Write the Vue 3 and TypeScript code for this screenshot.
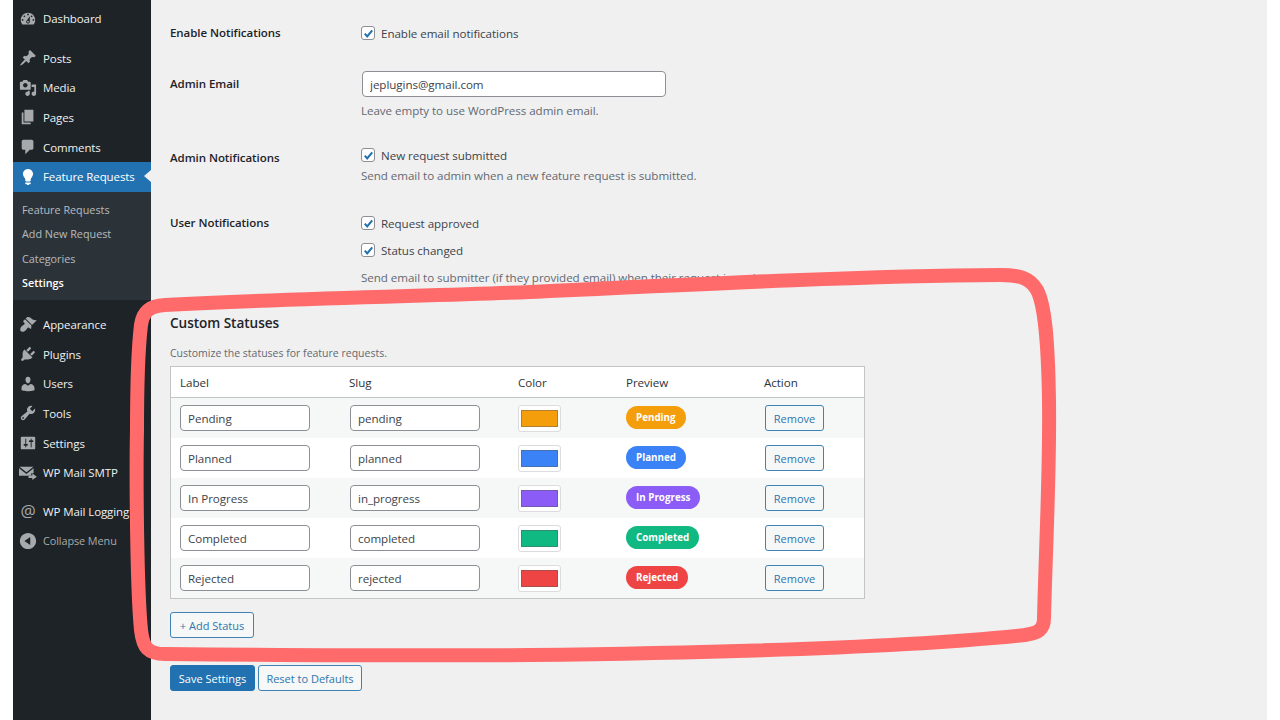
<script setup lang="ts">
interface MenuItem { label: string; d: string; sep?: boolean }
const p = {
  dashboard: 'M3.76 16h12.48c1.1-1.37 1.76-3.11 1.76-5 0-4.42-3.58-8-8-8s-8 3.58-8 8c0 1.89.66 3.63 1.76 5zM10 4c.55 0 1 .45 1 1s-.45 1-1 1-1-.45-1-1 .45-1 1-1zM6 6c.55 0 1 .45 1 1s-.45 1-1 1-1-.45-1-1 .45-1 1-1zm8 0c.55 0 1 .45 1 1s-.45 1-1 1-1-.45-1-1 .45-1 1-1zm-5.37 5.55L12 7v6c0 1.1-.9 2-2 2s-2-.9-2-2c0-.57.24-1.08.63-1.45zM4 10c.55 0 1 .45 1 1s-.45 1-1 1-1-.45-1-1 .45-1 1-1zm12 0c.55 0 1 .45 1 1s-.45 1-1 1-1-.45-1-1 .45-1 1-1zm-5 3c0-.55-.45-1-1-1s-1 .45-1 1 .45 1 1 1 1-.45 1-1z',
  post: 'M10.44 3.02l1.82-1.82 6.36 6.35-1.83 1.82c-1.05-.68-2.48-.57-3.41.36l-.75.75c-.92.93-1.04 2.35-.35 3.41l-1.83 1.82-2.41-2.41-2.8 2.79c-.42.42-3.38 2.71-3.8 2.29s1.86-3.39 2.28-3.81l2.79-2.79L4.1 9.36l1.83-1.82c1.05.69 2.48.57 3.4-.36l.75-.75c.93-.92 1.05-2.35.36-3.41z',
  media: 'M13 11V4c0-.55-.45-1-1-1h-1.67L9 1H5L3.67 3H2c-.55 0-1 .45-1 1v7c0 .55.45 1 1 1h10c.55 0 1-.45 1-1zM7 4.5c1.38 0 2.5 1.12 2.5 2.5S8.38 9.5 7 9.5 4.5 8.38 4.5 7 5.62 4.5 7 4.5zM14 6h5v10.5c0 1.38-1.12 2.5-2.5 2.5S14 17.88 14 16.5s1.12-2.5 2.5-2.5c.17 0 .34.02.5.05V9h-3V6zm-4 8.05V13h2v3.5c0 1.38-1.12 2.5-2.5 2.5S7 17.88 7 16.5 8.12 14 9.5 14c.17 0 .34.02.5.05z',
  page: 'M6 15V2h10v13H6zm-1 1h8v2H3V5h2v11z',
  comment: 'M5 2h9c1.1 0 2 .9 2 2v7c0 1.1-.9 2-2 2h-2l-5 5v-5H5c-1.1 0-2-.9-2-2V4c0-1.1.9-2 2-2z',
  bulb: 'M10 1c3.11 0 5.63 2.52 5.63 5.62 0 1.84-2.03 4.58-2.03 4.58-.33.44-.6 1.25-.6 1.8v1c0 .55-.45 1-1 1H8c-.55 0-1-.45-1-1v-1c0-.55-.27-1.36-.6-1.8 0 0-2.02-2.74-2.02-4.58C4.38 3.52 6.89 1 10 1zM7 16.87V16h6v.87c0 .62-.13 1.13-1.25 1.13H11v1H9v-1h-.75C7.13 18 7 17.5 7 16.87z',
  brush: 'M14.48 11.06L7.41 3.99l1.5-1.5c.5-.56 2.3-.47 3.51.32 1.21.8 1.43 1.28 2.91 2.1 1.18.64 2.45 1.26 4.45.85zm-.71.71L6.7 4.7 4.93 6.47c-.39.39-.39 1.02 0 1.41l1.06 1.06c.39.39.39 1.03 0 1.42-.6.6-1.43 1.11-2.21 1.69-.35.26-.7.53-1.01.84-1.34 1.34-1.86 3.35-.9 5.28 1.93.96 3.94.44 5.28-.9.31-.31.58-.66.84-1.01.58-.78 1.09-1.61 1.69-2.21.39-.39 1.03-.39 1.42 0l1.06 1.06c.39.39 1.02.39 1.41 0z',
  plugin: 'M13.11 4.36L9.87 7.6 8 5.73l3.24-3.24c.35-.34 1.05-.2 1.56.32.52.51.66 1.21.31 1.55zm-8 1.77l.91-1.12 9.01 9.01-1.19.84c-.71.71-2.63 1.16-3.82 1.16H6.14L4.9 17.26c-.59.59-1.54.59-2.12 0-.59-.58-.59-1.53 0-2.12l1.24-1.24v-3.88c0-1.13.4-3.19 1.09-3.89zm7.26 3.97l3.24-3.24c.34-.35 1.04-.21 1.55.31.52.51.66 1.21.31 1.55l-3.24 3.25z',
  users: 'M10 9.25c-2.27 0-2.73-3.44-2.73-3.44C7 4.02 7.82 2 9.97 2c2.16 0 2.98 2.02 2.71 3.81 0 0-.41 3.44-2.68 3.44zm0 2.57L12.72 10c2.39 0 4.52 2.33 4.52 4.53v2.49s-3.65 1.13-7.24 1.13c-3.65 0-7.24-1.13-7.24-1.13v-2.49c0-2.25 1.94-4.48 4.47-4.48z',
  tools: 'M16.68 9.77c-1.34 1.34-3.3 1.67-4.95.99l-5.41 6.52c-.99.99-2.59.99-3.58 0s-.99-2.59 0-3.57l6.52-5.42c-.68-1.65-.35-3.61.99-4.95 1.28-1.28 3.12-1.62 4.72-1.06l-2.89 2.89 2.82 2.82 2.86-2.87c.53 1.58.18 3.39-1.08 4.67zM3.81 16.21c.4.39 1.04.39 1.43 0 .4-.4.4-1.04 0-1.43-.39-.4-1.03-.4-1.43 0-.39.39-.39 1.03 0 1.43z',
  settings: 'M18 16V4c0-.55-.45-1-1-1H3c-.55 0-1 .45-1 1v12c0 .55.45 1 1 1h14c.55 0 1-.45 1-1zM8 11h1c.55 0 1 .45 1 1s-.45 1-1 1H8v1.5c0 .28-.22.5-.5.5s-.5-.22-.5-.5V13H6c-.55 0-1-.45-1-1s.45-1 1-1h1V5.5c0-.28.22-.5.5-.5s.5.22.5.5V11zm5-2h-1c-.55 0-1-.45-1-1s.45-1 1-1h1V5.5c0-.28.22-.5.5-.5s.5.22.5.5V7h1c.55 0 1 .45 1 1s-.45 1-1 1h-1v5.5c0 .28-.22.5-.5.5s-.5-.22-.5-.5V9z',
  smtp: 'M0.5 3h15.5L8.3 9.2 0.5 3zM0 4.6l8.3 6.4 7.9-6.2v5.4h-2.6v2.8H0V4.6zM14.8 10.6l5 3.6-5 3.6v-2.2h-4.2v-2.8h4.2v-2.2z',
  collapse: 'M10 19c5 0 9-4 9-9s-4-9-9-9-9 4-9 9 4 9 9 9zm2.5-13.5v9L6 10l6.5-4.5z'
}
const top: MenuItem[] = [
  { label: 'Dashboard', d: p.dashboard },
  { label: 'Posts', d: p.post, sep: true },
  { label: 'Media', d: p.media },
  { label: 'Pages', d: p.page },
  { label: 'Comments', d: p.comment }
]
const lower: MenuItem[] = [
  { label: 'Appearance', d: p.brush, sep: true },
  { label: 'Plugins', d: p.plugin },
  { label: 'Users', d: p.users },
  { label: 'Tools', d: p.tools },
  { label: 'Settings', d: p.settings },
  { label: 'WP Mail SMTP', d: p.smtp }
]
const sub = ['Feature Requests', 'Add New Request', 'Categories', 'Settings']
const statuses = [
  { label: 'Pending', slug: 'pending', color: '#f59e0b' },
  { label: 'Planned', slug: 'planned', color: '#3b82f6' },
  { label: 'In Progress', slug: 'in_progress', color: '#8b5cf6' },
  { label: 'Completed', slug: 'completed', color: '#10b981' },
  { label: 'Rejected', slug: 'rejected', color: '#ef4444' }
]
</script>

<template>
  <div class="page">
    <nav class="side">
      <a v-for="m in top" :key="m.label" class="item" :class="{ sep: m.sep }">
        <svg class="ic" viewBox="0 0 20 20"><path fill-rule="evenodd" :d="m.d" /></svg>
        <span class="nowrap">{{ m.label }}</span>
      </a>
      <a class="item current">
        <svg class="ic" viewBox="0 0 20 20"><path :d="p.bulb" /></svg>
        <span class="nowrap">Feature Requests</span>
        <i class="arrow"></i>
      </a>
      <ul class="sub">
        <li v-for="(s, i) in sub" :key="s" :class="{ on: i === 3 }">{{ s }}</li>
      </ul>
      <a v-for="m in lower" :key="m.label" class="item" :class="{ sep: m.sep }">
        <svg class="ic" viewBox="0 0 20 20"><path fill-rule="evenodd" :d="m.d" /></svg>
        <span class="nowrap">{{ m.label }}</span>
      </a>
      <a class="item sep2">
        <span class="ic at">@</span>
        <span class="nowrap">WP Mail Logging</span>
      </a>
      <a class="item muted">
        <svg class="ic" viewBox="0 0 20 20"><path fill-rule="evenodd" :d="p.collapse" /></svg>
        <span class="nowrap">Collapse Menu</span>
      </a>
    </nav>

    <main class="main">
      <div class="row r1">
        <div class="lab">Enable Notifications</div>
        <div>
          <label class="check"><span class="box"><svg viewBox="0 0 14 14"><path d="M3 7.2l2.6 2.9L11 3.6" /></svg></span>Enable email notifications</label>
        </div>
      </div>

      <div class="row r2">
        <div class="lab">Admin Email</div>
        <div>
          <input class="field email" value="jeplugins@gmail.com" />
          <p class="help h2">Leave empty to use WordPress admin email.</p>
        </div>
      </div>

      <div class="row r3">
        <div class="lab low">Admin Notifications</div>
        <div>
          <label class="check"><span class="box"><svg viewBox="0 0 14 14"><path d="M3 7.2l2.6 2.9L11 3.6" /></svg></span>New request submitted</label>
          <p class="help">Send email to admin when a new feature request is submitted.</p>
        </div>
      </div>

      <div class="row r4">
        <div class="lab">User Notifications</div>
        <div>
          <label class="check"><span class="box"><svg viewBox="0 0 14 14"><path d="M3 7.2l2.6 2.9L11 3.6" /></svg></span>Request approved</label>
          <label class="check c2"><span class="box"><svg viewBox="0 0 14 14"><path d="M3 7.2l2.6 2.9L11 3.6" /></svg></span>Status changed</label>
          <p class="help h4">Send email to submitter (if they provided email) when their request is updated.</p>
        </div>
      </div>

      <h2 class="title">Custom Statuses</h2>
      <p class="help desc">Customize the statuses for feature requests.</p>

      <table class="tbl">
        <colgroup>
          <col class="c-label" /><col class="c-slug" /><col class="c-color" /><col class="c-prev" /><col />
        </colgroup>
        <thead>
          <tr><th>Label</th><th>Slug</th><th>Color</th><th>Preview</th><th>Action</th></tr>
        </thead>
        <tbody>
          <tr v-for="s in statuses" :key="s.slug">
            <td><input class="field cell" :value="s.label" /></td>
            <td><input class="field cell" :value="s.slug" /></td>
            <td>
              <div class="swatch"><div class="swatch-in" :style="{ background: s.color }"></div></div>
            </td>
            <td><span class="badge" :style="{ background: s.color }">{{ s.label }}</span></td>
            <td><button class="btn remove">Remove</button></td>
          </tr>
        </tbody>
      </table>

      <button class="btn add">+ Add Status</button>
      <div class="actions">
        <button class="btn primary">Save Settings</button>
        <button class="btn reset">Reset to Defaults</button>
      </div>
    </main>

    <svg class="scribble" viewBox="0 0 1280 720">
      <path d="M165 305 C 300 298 430 296 530 292 C 700 284 860 276 1000 275 C 1020 275 1030 278 1037 290 C 1045 305 1048 340 1049 400 C 1050 470 1046 540 1044 618 C 1044 630 1038 633 1025 635 C 900 648 700 653 530 655 C 400 656 280 655 165 654 C 148 654 143 648 141 630 C 137 590 136 480 137 430 C 137 390 138 350 141 325 C 143 311 150 306 165 305 Z" />
    </svg>
  </div>
</template>

<style>
html, body { margin: 0; background: #fff; }
</style>

<style scoped>
.page {
  position: relative;
  width: 1280px;
  height: 720px;
  overflow: hidden;
  display: flex;
  padding: 0 13px;
  box-sizing: border-box;
  font-family: "Open Sans", "Noto Sans", sans-serif;
  font-size: 11.6px;
  letter-spacing: -0.05px;
  color: #3c434a;
}
.side {
  width: 138px;
  flex: none;
  background: #1d2327;
  padding-top: 4.1px;
  box-sizing: border-box;
  overflow: hidden;
}
.item {
  position: relative;
  display: flex;
  align-items: center;
  height: 29.7px;
  color: #f0f0f1;
  font-size: 11.5px;
  letter-spacing: -0.1px;
}
.item.sep { margin-top: 9.4px; }
.item.sep2 { margin-top: 8.7px; }
.nowrap { white-space: nowrap; }
.ic {
  width: 18px;
  height: 18px;
  margin: 0 6px 0 6px;
  flex: none;
  fill: #a7aaad;
}
.at {
  font-size: 17px;
  line-height: 18px;
  text-align: center;
  color: #a7aaad;
}
.current { background: #2271b1; color: #fff; }
.current .ic { fill: #fff; }
.arrow {
  position: absolute;
  right: 0;
  top: 8.5px;
  border: 6.5px solid transparent;
  border-left: 0;
  border-right: 7px solid #f0f0f1;
}
.muted { color: #a7aaad; font-size: 10.9px; }
.sub {
  list-style: none;
  margin: 0 0 9.1px;
  padding: 6.3px 0 4.7px 9px;
  background: #2c3338;
  font-size: 10.8px;
  letter-spacing: 0;
  color: rgba(240, 246, 252, 0.7);
}
.sub li { height: 24.4px; line-height: 24.4px; white-space: nowrap; }
.sub li.on { color: #fff; font-weight: 600; }

.main {
  flex: 1;
  background: #f0f0f1;
  padding-left: 19px;
  min-width: 0;
}
.row { display: grid; grid-template-columns: 191px 1fr; }
.r1 { margin-top: 20px; }
.r2 { margin-top: 25px; }
.r3 { margin-top: 23px; }
.r4 { margin-top: 26px; }
.lab {
  box-sizing: border-box;
  height: 26px;
  font-weight: 600;
  color: #1d2327;
  line-height: 26px;
  font-size: 11.5px;
}
.low { padding-top: 3px; }
.check {
  display: flex;
  align-items: center;
  height: 26px;
  white-space: nowrap;
}
.c2 { margin-top: 1px; }
.box {
  width: 14px;
  height: 14px;
  margin-right: 6px;
  border: 1px solid #8c8f94;
  border-radius: 3px;
  background: #fff;
  box-sizing: border-box;
  flex: none;
  display: flex;
  align-items: center;
  justify-content: center;
}
.box svg { width: 13px; height: 13px; flex: none; }
.box path { fill: none; stroke: #2271b1; stroke-width: 2.2; }
.help {
  margin: 0;
  color: #646970;
  line-height: 16px;
  white-space: nowrap;
}
.h2 { margin-top: 6px; }
.h4 { margin-top: 7px; }
.field {
  display: block;
  box-sizing: border-box;
  height: 26px;
  padding: 0 7px;
  border: 1px solid #8c8f94;
  border-radius: 4px;
  background: #fff;
  color: #3c434a;
  font: inherit;
  letter-spacing: inherit;
  outline: none;
}
.email { width: 304px; margin-left: 1px; }
.title {
  margin: 27px 0 0;
  line-height: 20px;
  font-size: 13.6px;
  font-weight: 600;
  color: #1d2327;
}
.desc { margin-top: 12px; font-size: 10.5px; letter-spacing: 0; }
.tbl {
  margin-top: 5px;
  width: 695px;
  table-layout: fixed;
  border-collapse: separate;
  border-spacing: 0;
  background: #fff;
  border: 1px solid #c3c4c7;
  box-sizing: border-box;
}
.c-label, .c-slug { width: 169px; }
.c-color { width: 108px; }
.c-prev { width: 138px; }
th {
  height: 30px;
  padding: 0 9px;
  text-align: left;
  font-weight: 400;
  color: #2c3338;
  border-bottom: 1px solid #c3c4c7;
}
td { height: 40px; padding: 0 9px; box-sizing: border-box; }
td:nth-child(2) { padding-left: 10px; }
td:nth-child(5) { padding-left: 10px; }
tbody tr:nth-child(odd) td { background: #f6f7f7; }
.cell { width: 130px; }
.swatch {
  box-sizing: border-box;
  width: 43px;
  height: 27px;
  border: 1px solid #dcdcde;
  border-radius: 3px;
  background: #fff;
  padding: 4px 1px;
  display: flex;
}
.swatch-in {
  flex: 1;
  margin: 0 1px;
  border: 1px solid rgba(90, 90, 90, 0.45);
}
.badge {
  display: inline-block;
  padding: 0 10px;
  line-height: 23px;
  border-radius: 12px;
  color: #fff;
  font-size: 9.8px;
  letter-spacing: 0;
  font-weight: 700;
  white-space: nowrap;
  position: relative;
  top: -1px;
}
.btn {
  box-sizing: border-box;
  height: 26px;
  border: 1px solid #3f83b5;
  border-radius: 3px;
  background: #f6f7f7;
  color: #2f76ad;
  font: inherit;
  font-size: 11px;
  letter-spacing: 0;
  padding: 0;
  white-space: nowrap;
}
.remove { width: 59px; display: block; }
.add { display: block; margin-top: 13px; width: 84px; }
.actions { display: flex; gap: 3px; margin-top: 27px; }
.primary { width: 85px; background: #2271b1; border-color: #2271b1; color: #fff; }
.reset { width: 104px; }
.scribble {
  position: absolute;
  left: 0;
  top: 0;
  width: 1280px;
  height: 720px;
  pointer-events: none;
}
.scribble path { fill: none; stroke: #ff6b6b; stroke-width: 14; stroke-linejoin: round; }
</style>
